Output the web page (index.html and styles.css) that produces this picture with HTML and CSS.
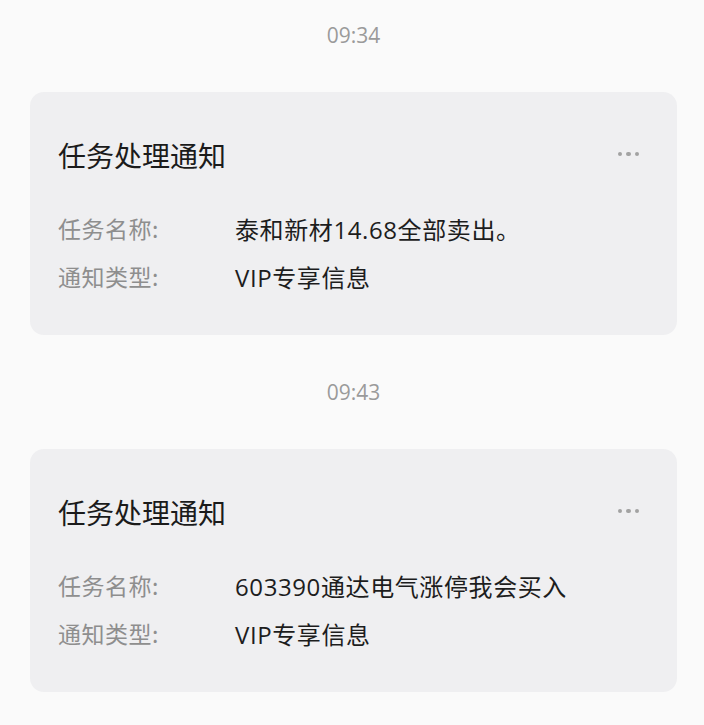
FILE: index.html
```html
<!DOCTYPE html>
<html lang="zh-CN">
  <head>
    <meta charset="UTF-8" />
    <meta name="viewport" content="width=device-width, initial-scale=1.0" />
    <title>任务处理通知</title>
    <link rel="stylesheet" href="styles.css">
  </head>
  <body>
    <div class="chat">
      <div class="time">09:34</div>
      <div class="card">
        <div class="card-head">
          <h3>任务处理通知</h3>
          <span class="more"><i></i><i></i><i></i></span>
        </div>
        <div class="row"><span class="label">任务名称:</span><span class="value">泰和新材14.68全部卖出。</span></div>
        <div class="row"><span class="label">通知类型:</span><span class="value">VIP专享信息</span></div>
      </div>

      <div class="time">09:43</div>
      <div class="card">
        <div class="card-head">
          <h3>任务处理通知</h3>
          <span class="more"><i></i><i></i><i></i></span>
        </div>
        <div class="row"><span class="label">任务名称:</span><span class="value">603390通达电气涨停我会买入</span></div>
        <div class="row"><span class="label">通知类型:</span><span class="value">VIP专享信息</span></div>
      </div>
    </div>
  </body>
</html>
```

FILE: styles.css
```css
body {
  margin: 0;
  background-color: #fafafa;
  font-family: "Noto Sans CJK SC", "Noto Sans", sans-serif;
}
.chat {
  padding: 23px 27px 0 30px;
}
.time {
  text-align: center;
  font-family: "Open Sans", "Noto Sans CJK SC", sans-serif;
  font-size: 21px;
  line-height: 24px;
  color: #9a9a9a;
  margin-bottom: 45px;
}
.card {
  background-color: #efeff1;
  border-radius: 14px;
  padding: 45px 38px 35px 28px;
  margin-bottom: 45px;
}
.card-head {
  display: flex;
  justify-content: space-between;
  align-items: center;
  margin-bottom: 31px;
}
h3 {
  margin: 0;
  font-size: 28px;
  line-height: 36px;
  font-weight: normal;
  color: #1b1b1b;
}
.more {
  display: flex;
  gap: 4px;
  margin-top: -2px;
}
.more i {
  width: 4.5px;
  height: 4.5px;
  border-radius: 50%;
  background-color: #a2a2a2;
}
.row {
  display: flex;
  align-items: center;
  height: 48px;
}
.label {
  width: 177px;
  font-size: 23px;
  letter-spacing: 0.5px;
  color: #8e8e8e;
}
.value {
  font-family: "Open Sans", "Noto Sans CJK SC", sans-serif;
  font-size: 24px;
  letter-spacing: 0.6px;
  color: #1d1d1d;
}
```
